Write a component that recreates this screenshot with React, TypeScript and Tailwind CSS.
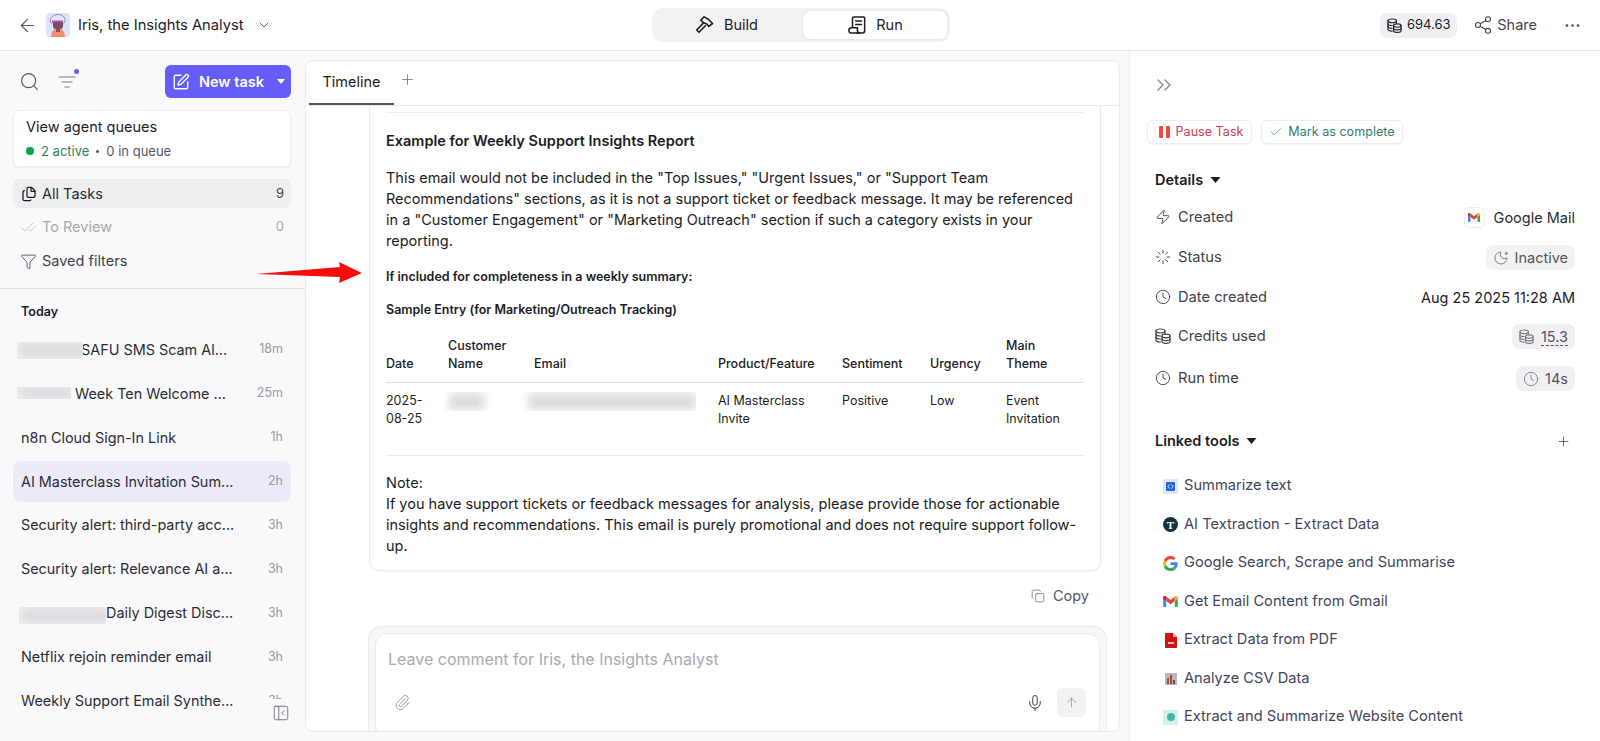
import React from "react";
import { ArrowLeft, ChevronDown, Search, SquarePen, Files, CheckCheck, Filter, Plus, Copy, Paperclip, Mic, ArrowUp, Share2, Ellipsis, ChevronsRight, Check, Zap, Clock, Loader, PanelLeftClose, MoonStar } from "lucide-react";

const tasks: [string, string, string][] = [
  ["SAFU SMS Scam Al...", "18m", "pl-[60px]"],
  ["Week Ten Welcome ...", "25m", "pl-[54px]"],
  ["n8n Cloud Sign-In Link", "1h", ""],
  ["AI Masterclass Invitation Sum...", "2h", ""],
  ["Security alert: third-party acc...", "3h", ""],
  ["Security alert: Relevance AI a...", "3h", ""],
  ["Daily Digest Disc...", "3h", "pl-[85px]"],
  ["Netflix rejoin reminder email", "3h", ""],
  ["Weekly Support Email Synthe...", "3h", ""],
];

function Gmail({ className }: { className?: string }) {
  return (
    <svg viewBox="0 0 24 18" className={className}>
      <path d="M0 3v13.500A1.500 1.500 0 0 0 1.500 18H5V8l-5-5z" fill="#4285f4" />
      <path d="M24 3v13.500a1.500 1.500 0 0 1-1.500 1.500H19V8l5-5z" fill="#34a853" />
      <path d="M19 1v7l5-4V2c0-2-2-2.500-3-1.800z" fill="#fbbc04" />
      <path d="M5 8V1l7 5.500L19 1v7l-7 5.500z" fill="#ea4335" />
      <path d="M0 2v2l5 4V1L3 .2C1.500-.5 0 .5 0 2z" fill="#c5221f" />
    </svg>
  );
}

function Coins({ className }: { className?: string }) {
  return (
    <svg viewBox="0 0 16 16" className={className} fill="none" stroke="currentColor" strokeWidth="1.200" strokeLinejoin="round" strokeLinecap="round">
      <ellipse cx="5.500" cy="3" rx="4.500" ry="2" />
      <path d="M1 3v9c0 1.100 2 2 4.500 2" />
      <path d="M10 3v2.500" />
      <path d="M1 6c0 1.100 2 2 4.500 2M1 9c0 1.100 2 2 4.500 2" />
      <ellipse cx="11" cy="8" rx="4" ry="1.800" />
      <path d="M7 8v5.500c0 1 1.800 1.800 4 1.800s4-.8 4-1.800V8" />
      <path d="M7 10.800c0 1 1.800 1.800 4 1.800s4-.8 4-1.800" />
    </svg>
  );
}

function HammerIcon() {
  return (
    <svg viewBox="0 0 20 20" className="w-[19px] h-[19px]" fill="none" stroke="#1c1c24" strokeWidth="1.700" strokeLinejoin="round">
      <path d="M6 5.500 L9.500 2 L14 4.500 L18.500 9 L14.500 12 L12.500 9.500 L9.500 8.500 Z" />
      <path d="M8.800 8.500 L1.800 15.800 L4.200 18.200 L11.400 10.800" />
    </svg>
  );
}

function RunIcon() {
  return (
    <svg viewBox="0 0 20 20" className="w-[18px] h-[18px]" fill="none" stroke="#1c1c24" strokeWidth="1.700" strokeLinejoin="round" strokeLinecap="round">
      <path d="M5 12V2.500A1.500 1.500 0 0 1 6.500 1H17.500a1 1 0 0 1 1 1v14.500A2.500 2.500 0 0 1 16 19H10" />
      <path d="M8.500 5.500h6.500M8.500 9.500h6.500" />
      <path d="M1 16a3 3 0 0 1 3-3h6.500v3.500A2.500 2.500 0 0 0 13 19H3.500A2.500 2.500 0 0 1 1 16.500z" />
    </svg>
  );
}

function Row({ icon, label, children, className }: { icon: React.ReactNode; label: string; children: React.ReactNode; className?: string }) {
  return (
    <div className={`flex items-center justify-between h-[26px] ${className ?? ""}`}>
      <div className="flex items-center gap-[7px] text-[14.7px] text-[#3f3f4a]">
        {icon}
        <span>{label}</span>
      </div>
      {children}
    </div>
  );
}

function Tool({ icon, label }: { icon: React.ReactNode; label: string }) {
  return (
    <div className="flex items-center h-[38.5px] pl-[8px] gap-[6px] text-[14.65px] text-[#45455a]">
      <span className="w-[15px] h-[15px] flex items-center justify-center shrink-0">{icon}</span>
      <span>{label}</span>
    </div>
  );
}

function Redact({ className, inner }: { className: string; inner: string }) {
  return (
    <div className={`absolute overflow-hidden ${className}`}>
      <div className={`absolute bg-[#dcdcdf] blur-[4px] ${inner}`} />
    </div>
  );
}

export default function App() {
  return (
    <div className="relative w-[1600px] h-[741px] overflow-hidden bg-[#f9f9fb] font-['Inter',sans-serif] text-[#1c1c24]">
      {/* top bar */}
      <header className="h-[51px] bg-white border-b border-[#e5e5ea] flex items-center justify-between pl-[17px] pr-[18px]">
        <div className="flex items-center w-[563px]">
          <ArrowLeft className="w-[21px] h-[21px] text-[#55555f]" strokeWidth={1.300} />
          <div className="ml-[8px] w-[24px] h-[24px] rounded-[4px] bg-[#dbe4fb] overflow-hidden">
            <svg viewBox="0 0 24 24" className="w-[24px] h-[24px]">
              <path d="M4 9c0-5 4-7.500 8-7.500s8 2.500 7 7.500l-1 1H6z" fill="#e3e9f7" stroke="#6f7299" strokeWidth="0.800" />
              <rect x="7" y="8" width="10" height="8" rx="3" fill="#7a4f63" />
              <rect x="6" y="7.500" width="11" height="1.800" fill="#b04fc0" />
              <path d="M5 24c0-6 3-8.500 7-8.500s7 2.500 7 8.500z" fill="#f28f6b" />
              <rect x="10" y="15" width="4" height="4" fill="#7a4f63" />
            </svg>
          </div>
          <span className="ml-[8px] text-[14.73px] text-[#1c1c24]">Iris, the Insights Analyst</span>
          <ChevronDown className="ml-[12px] w-[16px] h-[16px] text-[#55555f]" strokeWidth={1.500} />
        </div>
        <div className="w-[298px] h-[34px] -mt-[1px] bg-[#f2f2f3] rounded-[10px] flex p-[3px]">
          <div className="w-[148px] pr-[4px] flex items-center justify-center gap-[10px] text-[14.5px]">
            <HammerIcon />
            <span>Build</span>
          </div>
          <div className="flex-1 pl-[2px] bg-white rounded-[7px] shadow-[0_0_2px_rgba(0,0,0,0.15)] flex items-center justify-center gap-[10px] text-[14.5px]">
            <RunIcon />
            <span>Run</span>
          </div>
        </div>
        <div className="flex items-center justify-end w-[561px]">
          <div className="h-[25px] w-[77px] rounded-[7px] bg-[#f0f0f4] flex items-center justify-center gap-[5px] text-[13px]">
            <Coins className="w-[15px] h-[15px] text-[#1c1c24]" />
            <span>694.63</span>
          </div>
          <Share2 className="ml-[16px] w-[20px] h-[20px] text-[#45454f]" strokeWidth={1.300} />
          <span className="ml-[4px] text-[14.5px] text-[#45454f]">Share</span>
          <Ellipsis className="ml-[26px] w-[19px] h-[19px] text-[#45454f]" strokeWidth={1.400} />
        </div>
      </header>

      <div className="flex h-[690px]">
        {/* sidebar */}
        <aside className="relative w-[305px] shrink-0">
          <div className="pl-[13px] pr-[14px] pt-[14px]">
            <div className="flex items-center justify-between pl-[6px]">
              <div className="flex items-center gap-[18px]">
                <Search className="w-[21px] h-[21px] text-[#55555f]" strokeWidth={1.300} />
                <div className="relative">
                  <svg viewBox="0 0 18 14" className="w-[18px] h-[14px]" fill="none" stroke="#77777f" strokeWidth="1.200" strokeLinecap="round">
                    <path d="M1 2h16M4 7h10M7 12h4" />
                  </svg>
                  <span className="absolute -right-[3px] -top-[6px] w-[5px] h-[5px] rounded-full bg-[#655cf9]" />
                </div>
              </div>
              <div className="w-[126px] h-[33px] rounded-[6px] bg-[#655cf9] text-white flex items-center pl-[7px] text-[14.5px] font-semibold">
                <SquarePen className="w-[18px] h-[18px]" strokeWidth={1.800} />
                <span className="ml-[9px]">New task</span>
                <svg viewBox="0 0 8 5" className="ml-[13px] w-[8px] h-[5px]"><path d="M0 0h8L4 5z" fill="#fff" /></svg>
              </div>
            </div>
            <div className="mt-[12px] h-[57px] rounded-[6px] bg-white border border-[#ececf1] shadow-[0_1px_2px_rgba(0,0,0,0.05)] pl-[12px] pt-[6px]">
              <div className="text-[14.5px] leading-[20px]">View agent queues</div>
              <div className="mt-[5px] flex items-center text-[13px] leading-[18px]">
                <span className="w-[8px] h-[8px] rounded-full bg-[#10a050] ring-2 ring-[#eaf7ef]" />
                <span className="ml-[7px] text-[#2f7f5f]">2 active</span>
                <span className="mx-[7px] w-[3px] h-[3px] rounded-full bg-[#55555f]" />
                <span className="text-[#55556a]">0 in queue</span>
              </div>
            </div>
            <div className="mt-[12px] h-[29px] rounded-[6px] bg-[#eeeef1] flex items-center pl-[8px] pr-[7px] text-[14.5px]">
              <Files className="w-[16px] h-[16px] text-[#1c1c24]" strokeWidth={1.900} />
              <span className="ml-[5px] text-[#2c2c36]">All Tasks</span>
              <span className="ml-auto text-[13px] text-[#45454f]">9</span>
            </div>
            <div className="h-[34px] mt-[2px] flex items-center pl-[7px] pr-[7px] text-[14.5px] text-[#a7a7b0]">
              <CheckCheck className="w-[17px] h-[17px] text-[#c4c4cc]" strokeWidth={1.300} />
              <span className="ml-[5px]">To Review</span>
              <span className="ml-auto text-[13px]">0</span>
            </div>
            <div className="h-[34px] flex items-center pl-[7px] text-[14.5px] text-[#3f3f4a]">
              <Filter className="w-[17px] h-[17px] text-[#55555f]" strokeWidth={1.300} />
              <span className="ml-[5px]">Saved filters</span>
            </div>
          </div>
          <div className="mt-[10px] border-t border-[#dfdfe5] pt-[15px]">
            <div className="pl-[21px] text-[12.5px] font-semibold leading-[16px]">Today</div>
            <div className="mt-[9px] ml-[13px] mr-[14px] flex flex-col gap-[2.950px]">
              {tasks.map(([t, time, pad], i) => (
                <div key={t} className={`h-[41px] shrink-0 rounded-[8px] pl-[8px] pr-[8px] flex items-center justify-between ${i === 3 ? "bg-[#eaeaf9]" : ""}`}>
                  <span className={`text-[14.4px] text-[#2c2c36] ${pad}`}>{t}</span>
                  <span className="text-[12.5px] text-[#9a9aa4]">{time}</span>
                </div>
              ))}
            </div>
          </div>
          <div className="absolute left-[262px] top-[648px] w-[43px] h-[42px] bg-[#f9f9fb] flex pl-[10px] pt-[5px]">
            <PanelLeftClose className="w-[18px] h-[18px] text-[#6b6b75]" strokeWidth={1.200} />
          </div>
        </aside>

        {/* centre */}
        <main className="relative mt-[9px] w-[815px] h-[672px] bg-white rounded-[8px] border border-[#e9e9ee] overflow-hidden">
          <div className="h-[45px] border-b border-[#e9e9ee] flex items-start pl-[3px]">
            <div className="h-[44px] w-[85px] border-b-2 border-[#55555f] flex items-center justify-center text-[14.5px]">Timeline</div>
            <Plus className="ml-[5px] mt-[10px] w-[17px] h-[17px] text-[#77778a]" strokeWidth={1.200} />
          </div>
          <div className="ml-[63px] w-[732px] h-[465px] rounded-b-[10px] border border-t-0 border-[#e9e9ee] shadow-[0_1px_2px_rgba(0,0,0,0.05)] pl-[16px] pr-[16px] pt-[6px] text-[#1c1c24]">
            <div className="w-[698px] h-px bg-[#ececf1]" />
            <div className="mt-[17px] text-[14.5px] leading-[21px] font-semibold">Example for Weekly Support Insights Report</div>
            <p className="mt-[16px] text-[14.5px] leading-[21px]">
              This email would not be included in the "Top Issues," "Urgent Issues," or "Support Team Recommendations" sections, as it is not a support ticket or feedback message. It may be referenced in a "Customer Engagement" or "Marketing Outreach" section if such a category exists in your reporting.
            </p>
            <div className="mt-[17px] text-[12.5px] leading-[18px] font-semibold">If included for completeness in a weekly summary:</div>
            <div className="mt-[15px] text-[12.5px] leading-[18px] font-semibold">Sample Entry (for Marketing/Outreach Tracking)</div>
            <table className="mt-[18px] w-[698px] table-fixed text-[12.5px] leading-[18px] text-left">
              <thead>
                <tr className="border-b border-[#dedee6] align-bottom">
                  <th className="w-[62px] font-medium pb-[9px]">Date</th>
                  <th className="w-[86px] font-medium pb-[9px]">Customer Name</th>
                  <th className="w-[184px] font-medium pb-[9px]">Email</th>
                  <th className="w-[124px] font-medium pb-[9px]">Product/Feature</th>
                  <th className="w-[88px] font-medium pb-[9px]">Sentiment</th>
                  <th className="w-[76px] font-medium pb-[9px]">Urgency</th>
                  <th className="font-medium pb-[9px] pr-[20px]">Main Theme</th>
                </tr>
              </thead>
              <tbody>
                <tr className="border-b border-[#e9e9ee] align-top">
                  <td className="pt-[9px] pb-[27px] pr-[20px]">2025-08-25</td>
                  <td className="pt-[9px] pb-[27px]" />
                  <td className="pt-[9px] pb-[27px]" />
                  <td className="pt-[9px] pb-[27px] pr-[20px]">AI Masterclass Invite</td>
                  <td className="pt-[9px] pb-[27px]">Positive</td>
                  <td className="pt-[9px] pb-[27px]">Low</td>
                  <td className="pt-[9px] pb-[27px] pr-[10px]">Event Invitation</td>
                </tr>
              </tbody>
            </table>
            <div className="mt-[16px] text-[14.5px] leading-[21px]">
              Note:
              <br />
              If you have support tickets or feedback messages for analysis, please provide those for actionable insights and recommendations. This email is purely promotional and does not require support follow-up.
            </div>
          </div>
          <div className="h-[55px] ml-[63px] w-[732px] flex items-center justify-end pr-[12px] pb-[5px] text-[14.5px] text-[#55556a]">
            <Copy className="w-[14px] h-[14px] mr-[8px] text-[#77777f]" strokeWidth={1.400} />
            Copy
          </div>
          <div className="ml-[62px] w-[739px] h-[110px] rounded-t-[14px] border border-b-0 border-[#e9e9ee] bg-[#f7f7f9] px-[6px] pt-[6px]">
            <div className="h-[104px] w-[725px] rounded-[12px] border border-[#e9e9ee] bg-white relative pl-[12px] pt-[14px]">
              <div className="text-[16px] leading-[22px] text-[#a9a9b3]">Leave comment for Iris, the Insights Analyst</div>
              <div className="mt-[18px] flex items-center h-[29px] pr-[13px]">
                <Paperclip className="ml-[6px] w-[17px] h-[17px] text-[#9a9aa4]" strokeWidth={1.400} />
                <Mic className="ml-auto w-[18px] h-[18px] text-[#3f3f4a]" strokeWidth={1.300} />
                <div className="ml-[13px] w-[29px] h-[29px] rounded-[6px] bg-[#f2f2f3] flex items-center justify-center">
                  <ArrowUp className="w-[15px] h-[15px] text-[#9a9aa4]" strokeWidth={1.400} />
                </div>
              </div>
            </div>
          </div>
        </main>

        {/* right */}
        <aside className="ml-[9px] flex-1 bg-white border-l border-[#ececf1] pl-[17px] pr-[25px] pt-[22px]">
          <ChevronsRight className="ml-[5px] w-[24px] h-[24px] text-[#8a8a94]" strokeWidth={1.400} />
          <div className="mt-[23px] flex gap-[9px] text-[12.6px]">
            <div className="h-[24px] w-[105px] pl-[3px] rounded-[5px] border border-[#ececf1] shadow-[0_1px_1px_rgba(0,0,0,0.04)] flex items-center justify-center gap-[6px] text-[#c9405a]">
              <svg viewBox="0 0 11 12" className="w-[11px] h-[12px]"><rect x="0" y="0" width="4" height="12" rx="1" fill="#f4473f" /><rect x="7" y="0" width="4" height="12" rx="1" fill="#f4473f" /></svg>
              Pause Task
            </div>
            <div className="h-[24px] w-[142px] rounded-[5px] border border-[#ececf1] shadow-[0_1px_1px_rgba(0,0,0,0.04)] flex items-center justify-center gap-[5px] text-[#2f7f6f]">
              <Check className="w-[14px] h-[14px] text-[#22b060]" strokeWidth={1.400} />
              Mark as complete
            </div>
          </div>
          <div className="mt-[24px] pl-[8px]">
            <div className="flex items-center gap-[7px] text-[14.5px] font-semibold leading-[24px]">
              Details
              <svg viewBox="0 0 10 6" className="w-[11px] h-[6px]"><path d="M0 0h10L5 6z" fill="#1c1c24" /></svg>
            </div>
            <div className="mt-[12.5px]">
              <Row icon={<Zap className="w-[16px] h-[16px]" strokeWidth={1.400} />} label="Created">
                <div className="flex items-center gap-[9px] text-[14.5px] text-[#2c2c36]">
                  <span className="w-[21px] h-[21px] rounded-[5px] border border-[#ececf1] flex items-center justify-center"><Gmail className="w-[12px] h-[9px]" /></span>
                  Google Mail
                </div>
              </Row>
              <Row className="mt-[14px]" icon={<Loader className="w-[16px] h-[16px]" strokeWidth={1.400} />} label="Status">
                <div className="h-[25px] px-[7px] rounded-[7px] bg-[#f2f2f3] flex items-center gap-[6px] text-[14.5px] text-[#55555f]">
                  <MoonStar className="w-[16px] h-[16px] text-[#77777f]" strokeWidth={1.400} />
                  Inactive
                </div>
              </Row>
              <Row className="mt-[14px]" icon={<Clock className="w-[16px] h-[16px]" strokeWidth={1.400} />} label="Date created">
                <span className="text-[14.5px] text-[#1c1c24]">Aug 25 2025 11:28 AM</span>
              </Row>
              <Row className="mt-[13px]" icon={<Coins className="w-[16px] h-[16px]" />} label="Credits used">
                <div className="h-[25px] px-[7px] rounded-[7px] bg-[#f0f0f4] flex items-center gap-[7px] text-[14.5px] text-[#55555f]">
                  <Coins className="w-[15px] h-[15px] text-[#77777f]" />
                  <span className="border-b border-dashed border-[#55555f] leading-[17px]">15.3</span>
                </div>
              </Row>
              <Row className="mt-[16px]" icon={<Clock className="w-[16px] h-[16px]" strokeWidth={1.400} />} label="Run time">
                <div className="h-[25px] px-[7px] rounded-[7px] bg-[#f0f0f4] flex items-center gap-[6px] text-[14.5px] text-[#55555f]">
                  <Clock className="w-[16px] h-[16px] text-[#77777f]" strokeWidth={1.300} />
                  14s
                </div>
              </Row>
            </div>
            <div className="mt-[37.5px] flex items-center justify-between">
              <div className="flex items-center gap-[7px] text-[14.5px] font-semibold leading-[24px]">
                Linked tools
                <svg viewBox="0 0 10 6" className="w-[11px] h-[6px]"><path d="M0 0h10L5 6z" fill="#1c1c24" /></svg>
              </div>
              <Plus className="mr-[4px] w-[15px] h-[15px] text-[#45454f]" strokeWidth={1.300} />
            </div>
            <div className="mt-[14px]">
              <Tool label="Summarize text" icon={
                <span className="w-[15px] h-[15px] bg-[#dfe7fb] flex items-center justify-center">
                  <svg viewBox="0 0 9 9" className="w-[9px] h-[9px]">
                    <rect width="9" height="9" rx="1" fill="#2563eb" />
                    <path d="M3.500 2.500 2 4.500l1.500 2M5.500 2.500 7 4.500l-1.500 2" fill="none" stroke="#fff" strokeWidth="0.800" />
                  </svg>
                </span>} />
              <Tool label="AI Textraction - Extract Data" icon={<span className="w-[15px] h-[15px] rounded-full bg-[#12343b] text-white text-[11px] font-bold font-['Liberation_Serif',serif] flex items-center justify-center">T</span>} />
              <Tool label="Google Search, Scrape and Summarise" icon={
                <svg viewBox="0 0 48 48" className="w-[15px] h-[15px]">
                  <path fill="#ea4335" d="M24 9.500c3.500 0 6.700 1.200 9.200 3.600l6.900-6.900C35.900 2.400 30.500 0 24 0 14.600 0 6.500 5.400 2.600 13.200l8 6.200C12.500 13.700 17.800 9.500 24 9.500z" />
                  <path fill="#4285f4" d="M47 24.500c0-1.600-.1-3.100-.4-4.500H24v9h13c-.6 3-2.300 5.500-4.800 7.200l7.700 6C44.400 37.900 47 31.700 47 24.500z" />
                  <path fill="#fbbc05" d="M10.500 28.600c-.5-1.400-.8-3-.8-4.600s.3-3.200.8-4.600l-8-6.200C.9 16.400 0 20.100 0 24s.9 7.600 2.600 10.800z" />
                  <path fill="#34a853" d="M24 48c6.500 0 11.900-2.100 15.900-5.800l-7.700-6c-2.100 1.400-4.900 2.300-8.200 2.300-6.200 0-11.500-4.200-13.400-9.900l-8 6.200C6.500 42.600 14.600 48 24 48z" />
                </svg>} />
              <Tool label="Get Email Content from Gmail" icon={<Gmail className="w-[15px] h-[11px]" />} />
              <Tool label="Extract Data from PDF" icon={
                <svg viewBox="0 0 12 15" className="w-[12px] h-[15px]">
                  <path d="M0 1a1 1 0 0 1 1-1h7l4 4v10a1 1 0 0 1-1 1H1a1 1 0 0 1-1-1z" fill="#d40f14" />
                  <path d="M8 0l4 4H8z" fill="#f3a7a7" />
                  <rect x="3" y="9" width="6" height="2" fill="#fff" opacity="0.7" />
                </svg>} />
              <Tool label="Analyze CSV Data" icon={
                <span className="w-[12px] h-[12px] bg-[#b9b9bd] flex items-end justify-center gap-[1px] p-[1px]">
                  <span className="w-[2px] h-[6px] bg-[#9a5a35]" />
                  <span className="w-[2px] h-[9px] bg-[#c03a2b]" />
                  <span className="w-[2px] h-[4px] bg-[#4a5a4a]" />
                </span>} />
              <Tool label="Extract and Summarize Website Content" icon={
                <span className="w-[15px] h-[15px] bg-[#d4f0ee] flex items-center justify-center"><span className="w-[8px] h-[8px] rounded-full bg-[#45b5ad]" /></span>} />
            </div>
          </div>
        </aside>
      </div>

      {/* overlays: redaction blurs and annotation arrow */}
      <Redact className="left-[17px] top-[342px] w-[66px] h-[17px] bg-[#f1f1f3]" inner="left-[2px] right-[-4px] top-[1px] bottom-[1px]" />
      <Redact className="left-[17px] top-[387px] w-[54px] h-[12px] bg-[#f1f1f3]" inner="left-[2px] right-[-4px] top-0 bottom-0" />
      <Redact className="left-[19px] top-[607px] w-[87px] h-[17px] bg-[#f1f1f3]" inner="left-[2px] right-[-4px] top-[1px] bottom-[1px]" />
      <Redact className="left-[445px] top-[392px] w-[251px] h-[19px] bg-white" inner="left-[4px] w-[36px] top-[1px] bottom-[1px]" />
      <Redact className="left-[520px] top-[392px] w-[176px] h-[19px] bg-white" inner="left-[8px] right-0 top-[1px] bottom-[1px]" />
      <svg viewBox="0 0 112 24" className="absolute left-[255px] top-[260px] w-[112px] h-[24px]">
        <path d="M1 14 L85 7 L84 2 L107 13 L84 23 L85 17 Z" fill="#f50d0d" />
      </svg>
    </div>
  );
}
